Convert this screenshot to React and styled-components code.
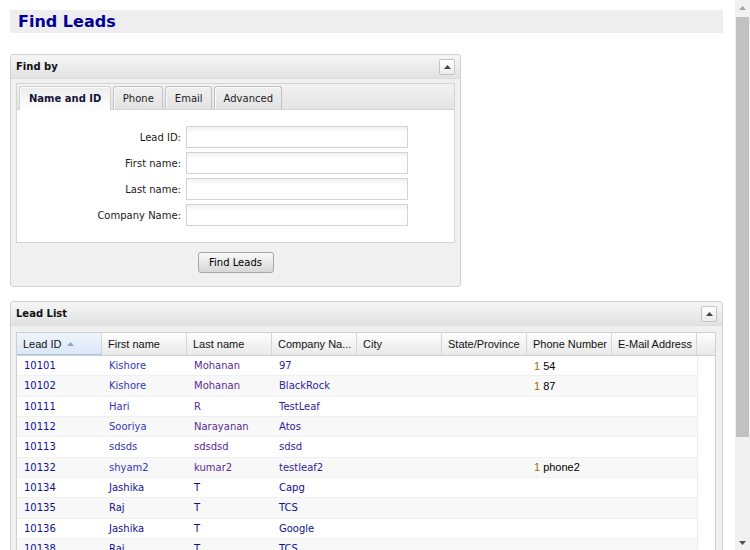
import React from 'react';
import styled, { createGlobalStyle } from 'styled-components';

const Global = createGlobalStyle`
  html, body { margin: 0; padding: 0; background: #fff; overflow: hidden; }
  body { font-family: "DejaVu Sans", Tahoma, sans-serif; font-size: 10px; color: #000; }
`;

const Window = styled.div`
  display: flex;
  height: 550px;
  overflow: hidden;
`;

const Page = styled.div`
  flex: 1;
  min-width: 0;
  padding: 10px 12px 10px 10px;
  display: flex;
  flex-direction: column;
  overflow: hidden;
`;

const ScrollBar = styled.div`
  width: 15px;
  flex: none;
  background: #f1f1f1;
  display: flex;
  flex-direction: column;
  align-items: center;
`;

const ScrollBtn = styled.div`
  height: 15px;
  width: 15px;
  flex: none;
  display: flex;
  align-items: center;
  justify-content: center;
`;

const ScrollTrack = styled.div`
  flex: 1;
  width: 100%;
  display: flex;
  flex-direction: column;
  align-items: center;
  padding-top: 2px;
  box-sizing: border-box;
`;

const Thumb = styled.div`
  width: 13px;
  height: 420px;
  flex: none;
  background: #c1c1c1;
`;

const TitleBar = styled.div`
  flex: none;
  background: #eeeeee;
  height: 23px;
  display: flex;
  align-items: center;
  padding-left: 8px;
`;

const Title = styled.h1`
  margin: 0;
  font: bold 16px "DejaVu Sans", Tahoma, sans-serif;
  color: #000099;
`;

const Panel = styled.section`
  margin-top: ${p => p.$mt}px;
  width: ${p => (p.$w ? `${p.$w}px` : 'auto')};
  flex: none;
  box-sizing: border-box;
  border: 1px solid #d0d0d0;
  border-radius: 3px;
  background: #f0f0f0;
`;

const PanelHeader = styled.div`
  height: 23px;
  display: flex;
  align-items: center;
  justify-content: space-between;
  padding: 0 5px;
  background: linear-gradient(#f6f6f6, #e2e2e2);
  border-bottom: 1px solid #dcdcdc;
  border-radius: 3px 3px 0 0;
`;

const PanelTitle = styled.span`
  font-weight: bold;
  font-size: 10px;
  color: #111;
`;

const CollapseBtn = styled.div`
  width: 16px;
  height: 16px;
  box-sizing: border-box;
  border: 1px solid #c4c4c4;
  border-radius: 2px;
  background: linear-gradient(#ffffff, #ececec);
  display: flex;
  align-items: center;
  justify-content: center;
`;

const PanelBody = styled.div`
  padding: ${p => p.$pad};
`;

const TabBox = styled.div`
  border: 1px solid #d4d4d4;
  background: #fff;
`;

const TabStrip = styled.div`
  height: 26px;
  box-sizing: border-box;
  display: flex;
  align-items: flex-end;
  gap: 2px;
  padding: 0 2px;
  background: linear-gradient(#f2f2f2, #e4e4e4);
  border-bottom: 1px solid #d4d4d4;
`;

const Tab = styled.div`
  height: ${p => (p.$active ? 24 : 23)}px;
  box-sizing: border-box;
  padding: 0 ${p => (p.$active ? 9 : 8.5)}px;
  display: flex;
  align-items: center;
  font-weight: ${p => (p.$active ? 'bold' : 'normal')};
  color: ${p => (p.$active ? '#15153a' : '#222')};
  border: 1px solid ${p => (p.$active ? '#d2d2d2' : '#c2c2c2')};
  border-bottom: none;
  border-radius: 3px 3px 0 0;
  margin-bottom: ${p => (p.$active ? -1 : 0)}px;
  background: ${p => (p.$active ? 'linear-gradient(#ececec, #f8f8f8 60%, #ffffff)' : 'linear-gradient(#f0f0f0, #e2e2e2)')};
  box-shadow: inset 1px 1px 0 #fafafa;
`;

const Form = styled.div`
  display: grid;
  grid-template-columns: 164px 222px;
  column-gap: 5px;
  row-gap: 4px;
  padding: 16px 0 16px;
  align-items: center;
`;

const Label = styled.label`
  text-align: right;
  color: #1a1a1a;
`;

const Input = styled.input`
  width: 222px;
  height: 22px;
  box-sizing: border-box;
  border: 1px solid #d2d2dc;
  background: linear-gradient(#f1f1f1, #ffffff 6px);
  outline: none;
  margin: 0;
`;

const ButtonRow = styled.div`
  display: flex;
  justify-content: center;
  padding: 9px 0 8px;
`;

const Button = styled.button`
  width: 76px;
  height: 21px;
  box-sizing: border-box;
  border: 1px solid #a6a6a6;
  border-radius: 3px;
  background: linear-gradient(#fafafa, #e6e6e6 55%, #d8d8d8);
  font: 10px "DejaVu Sans", Tahoma, sans-serif;
  color: #000;
  padding: 0;
`;

const Grid = styled.div`
  border: 1px solid #d0d0d0;
  background: #fff;
`;

const HeaderRow = styled.div`
  display: flex;
  height: 22px;
  background: linear-gradient(#ffffff, #f3f3f3 50%, #e9e9e9);
  border-bottom: 1px solid #d0d0d0;
`;

const HeaderCell = styled.div`
  width: 85px;
  box-sizing: border-box;
  flex: none;
  display: flex;
  align-items: center;
  gap: 5px;
  padding-left: 6px;
  white-space: nowrap;
  overflow: hidden;
  font: 11px "Liberation Sans", Arial, sans-serif;
  color: #111;
  border-right: 1px solid #d6d6d6;
  background: ${p => (p.$sorted ? 'linear-gradient(#eef4fc, #dbe7f7)' : 'transparent')};
  border-bottom: ${p => (p.$sorted ? '1px solid #a9c3e6' : 'none')};
`;

const HeaderFill = styled.div`
  flex: 1;
`;

const BodyWrap = styled.div`
  display: flex;
`;

const Rows = styled.div`
  width: 680px;
  flex: none;
`;

const Row = styled.div`
  display: flex;
  height: 19.33px;
  border-bottom: 1px solid #f0f0f0;
  background: ${p => (p.$odd ? '#f8f8f8' : '#ffffff')};
`;

const Cell = styled.div`
  width: 85px;
  flex: none;
  box-sizing: border-box;
  padding-left: 7px;
  display: flex;
  align-items: center;
  white-space: nowrap;
  overflow: hidden;
  font-family: ${p => (p.$arial ? '"Liberation Sans", Arial, sans-serif' : '"DejaVu Sans", Tahoma, sans-serif')};
  font-size: ${p => (p.$arial ? 11 : 10)}px;
  color: ${p => p.$c || '#000'};
`;

const Country = styled.span`
  color: #9c6b00;
  margin-right: 3px;
`;

const ScrollSpace = styled.div`
  flex: 1;
  border-left: 1px solid #ececec;
  background: #fff;
`;

const Arrow = ({ color = '#444', w = 7, h = 4, down = false }) => (
  <svg width={w} height={h} viewBox="0 0 7 4">
    <path d={down ? 'M0 0 L7 0 L3.5 4 Z' : 'M3.5 0 L7 4 L0 4 Z'} fill={color} />
  </svg>
);

const NAVY = '#10108f';
const V1 = '#3636b4';
const V2 = '#5b2a95';
const V3 = '#2f1f9c';

const leads = [
  ['10101', 'Kishore', 'Mohanan', '97', '54', true],
  ['10102', 'Kishore', 'Mohanan', 'BlackRock', '87', true],
  ['10111', 'Hari', 'R', 'TestLeaf', '', true],
  ['10112', 'Sooriya', 'Narayanan', 'Atos', '', true],
  ['10113', 'sdsds', 'sdsdsd', 'sdsd', '', true],
  ['10132', 'shyam2', 'kumar2', 'testleaf2', 'phone2', true],
  ['10134', 'Jashika', 'T', 'Capg', '', false],
  ['10135', 'Raj', 'T', 'TCS', '', false],
  ['10136', 'Jashika', 'T', 'Google', '', false],
  ['10138', 'Raj', 'T', 'TCS', '', false],
  ['10139', 'Babu', 'M', 'TestLeaf', '', false],
];

const headers = ['Lead ID', 'First name', 'Last name', 'Company Na...', 'City', 'State/Province', 'Phone Number', 'E-Mail Address'];

export default function App() {
  return (
    <>
      <Global />
      <Window>
        <Page>
          <TitleBar>
            <Title>Find Leads</Title>
          </TitleBar>

          <Panel $mt={21} $w={451}>
            <PanelHeader>
              <PanelTitle>Find by</PanelTitle>
              <CollapseBtn><Arrow /></CollapseBtn>
            </PanelHeader>
            <PanelBody $pad="4px 5px 5px 5px">
              <TabBox>
                <TabStrip>
                  <Tab $active>Name and ID</Tab>
                  <Tab>Phone</Tab>
                  <Tab>Email</Tab>
                  <Tab>Advanced</Tab>
                </TabStrip>
                <Form>
                  <Label>Lead ID:</Label>
                  <Input />
                  <Label>First name:</Label>
                  <Input />
                  <Label>Last name:</Label>
                  <Input />
                  <Label>Company Name:</Label>
                  <Input />
                </Form>
              </TabBox>
              <ButtonRow>
                <Button>Find Leads</Button>
              </ButtonRow>
            </PanelBody>
          </Panel>

          <Panel $mt={14}>
            <PanelHeader>
              <PanelTitle>Lead List</PanelTitle>
              <CollapseBtn><Arrow /></CollapseBtn>
            </PanelHeader>
            <PanelBody $pad="6px 6px 6px 5px">
              <Grid>
                <HeaderRow>
                  {headers.map((h, i) => (
                    <HeaderCell key={h} $sorted={i === 0}>
                      {h}
                      {i === 0 && <Arrow color="#8ea6c8" />}
                    </HeaderCell>
                  ))}
                  <HeaderFill />
                </HeaderRow>
                <BodyWrap>
                  <Rows>
                    {leads.map((r, i) => (
                      <Row key={r[0]} $odd={i % 2 === 1}>
                        <Cell $c={NAVY}>{r[0]}</Cell>
                        <Cell $c={r[5] ? V1 : NAVY}>{r[1]}</Cell>
                        <Cell $c={r[5] ? V2 : NAVY}>{r[2]}</Cell>
                        <Cell $c={r[5] ? V3 : NAVY}>{r[3]}</Cell>
                        <Cell />
                        <Cell />
                        <Cell $arial>
                          {r[4] && (<><Country>1</Country>{r[4]}</>)}
                        </Cell>
                        <Cell />
                      </Row>
                    ))}
                  </Rows>
                  <ScrollSpace />
                </BodyWrap>
              </Grid>
            </PanelBody>
          </Panel>
        </Page>
        <ScrollBar>
          <ScrollBtn><Arrow color="#a3a3a3" /></ScrollBtn>
          <ScrollTrack><Thumb /></ScrollTrack>
          <ScrollBtn><Arrow color="#505050" down /></ScrollBtn>
        </ScrollBar>
      </Window>
    </>
  );
}
